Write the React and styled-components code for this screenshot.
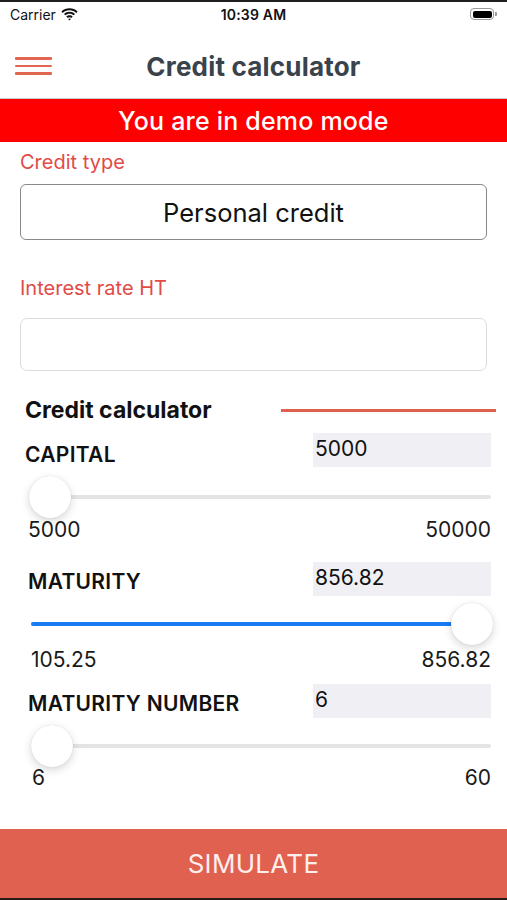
import React from "react";
import styled, { createGlobalStyle } from "styled-components";

const Global = createGlobalStyle`
  html, body { margin: 0; padding: 0; background: #fff; }
  body { font-family: Inter, "Noto Sans", "Liberation Sans", sans-serif; -webkit-font-smoothing: antialiased; }
  * { box-sizing: border-box; }
`;

const Screen = styled.div`
  width: 507px;
  height: 900px;
  display: flex;
  flex-direction: column;
  background: #fff;
  border-top: 2px solid #1e1e1e;
  border-bottom: 2px solid #2a1a18;
  overflow: hidden;
`;

const StatusBar = styled.div`
  height: 24px;
  display: grid;
  grid-template-columns: 1fr auto 1fr;
  align-items: center;
  padding: 0 10px;
  font-size: 14px;
  color: #111;
`;

const Carrier = styled.div`
  display: flex;
  align-items: center;
  gap: 5px;
  font-weight: 400;
`;

const Time = styled.div`
  font-weight: 600;
  letter-spacing: 0.2px;
`;

const Battery = styled.div`
  justify-self: end;
  display: flex;
  align-items: center;
`;

const BatteryBody = styled.div`
  width: 24px;
  height: 12px;
  border: 1px solid #9a9a9a;
  border-radius: 4px;
  padding: 1.5px;
  display: flex;
`;

const BatteryFill = styled.div`
  flex: 1;
  background: #000;
  border-radius: 2px;
`;

const BatteryNub = styled.div`
  width: 2px;
  height: 4px;
  background: #9a9a9a;
  border-radius: 0 1px 1px 0;
  margin-left: 1px;
`;

const NavBar = styled.div`
  height: 73px;
  display: flex;
  align-items: center;
  justify-content: center;
  position: relative;
  padding-top: 8px;
  border-bottom: 1px solid #c9c9c9;
`;

const Hamburger = styled.div`
  position: absolute;
  left: 15px;
  top: 31px;
  width: 37px;
  display: flex;
  flex-direction: column;
  gap: 5px;
`;

const HamLine = styled.div`
  height: 2.5px;
  background: #e06650;
  border-radius: 1px;
`;

const Title = styled.h1`
  margin: 0;
  font-size: 26px;
  font-weight: 700;
  color: #3a434b;
  letter-spacing: 0.2px;
`;

const Banner = styled.div`
  height: 43px;
  background: #ff0000;
  color: #fff;
  display: flex;
  align-items: center;
  justify-content: center;
  font-size: 25px;
  font-weight: 500;
  letter-spacing: 0.2px;
`;

const Form = styled.div`
  padding: 0 20px;
  display: flex;
  flex-direction: column;
`;

const FieldLabel = styled.div`
  color: #e24a47;
  font-size: 20px;
  line-height: 24px;
  margin-top: ${(p) => p.$top}px;
`;

const SelectBox = styled.div`
  margin-top: 10px;
  height: 56px;
  border: 1.5px solid #8a8a8a;
  border-radius: 6px;
  display: flex;
  align-items: center;
  justify-content: center;
  font-size: 25.5px;
  color: #111;
`;

const TextBox = styled.div`
  margin-top: 18px;
  height: 53px;
  border: 1.5px solid #dcdcdc;
  border-radius: 7px;
`;

const Calc = styled.div`
  padding: 0 16px 0 25px;
  display: flex;
  flex-direction: column;
  margin-top: 25px;
`;

const SectionHeader = styled.div`
  display: flex;
  align-items: center;
  justify-content: space-between;
  height: 28px;
  margin-right: -5px;
`;

const SectionTitle = styled.div`
  font-size: 23px;
  font-weight: 700;
  color: #111;
`;

const SectionRule = styled.div`
  width: 215px;
  height: 3px;
  background: #e0604e;
`;

const ParamRow = styled.div`
  display: flex;
  align-items: center;
  justify-content: space-between;
  height: 34px;
  margin-top: ${(p) => p.$top}px;
  padding-left: ${(p) => p.$indent}px;
`;

const ParamLabel = styled.div`
  font-size: 21px;
  font-weight: 600;
  color: #111;
  letter-spacing: 0.3px;
  padding-top: ${(p) => p.$drop}px;
`;

const ValueBox = styled.div`
  width: 178px;
  height: 34px;
  background: #efeff4;
  display: flex;
  align-items: center;
  padding-left: 2px;
  padding-bottom: 3px;
  font-size: 21px;
  color: #111;
`;

const SliderWrap = styled.div`
  position: relative;
  height: 44px;
  margin: ${(p) => p.$top}px -2px 0 4px;
  display: flex;
  align-items: center;
`;

const Track = styled.div`
  position: relative;
  flex: 1;
  height: 4px;
  background: #e4e4e4;
  border-radius: 2px;
  margin: 0 2px;
`;

const Fill = styled.div`
  position: absolute;
  left: 0;
  top: 0;
  bottom: 0;
  background: #1a7cf2;
  border-radius: 2px;
`;

const Thumb = styled.div`
  position: absolute;
  top: 1px;
  width: 42px;
  height: 42px;
  border-radius: 50%;
  background: #fff;
  box-shadow: 0 3px 8px rgba(0, 0, 0, 0.16), 0 0 1px rgba(0, 0, 0, 0.18);
`;

const Bounds = styled.div`
  display: flex;
  justify-content: space-between;
  font-size: 21px;
  line-height: 24px;
  color: #1a1a1a;
  margin-top: ${(p) => p.$top}px;
  padding-left: ${(p) => p.$indent}px;
`;

const Spacer = styled.div`
  flex: 1;
`;

const SimulateButton = styled.button`
  height: 69px;
  border: none;
  background: #e0614f;
  color: #fdeeee;
  font-family: inherit;
  font-size: 26px;
  font-weight: 400;
  letter-spacing: 0.3px;
  width: 100%;
`;

function Wifi() {
  return (
    <svg width="17" height="13" viewBox="0 0 17 13">
      <path d="M8.5 2.2c2.6 0 5 1 6.8 2.7l1.3-1.4C14.5 1.5 11.6.3 8.5.3S2.5 1.5.4 3.5l1.3 1.4C3.5 3.2 5.9 2.2 8.5 2.2z" fill="#111" />
      <path d="M8.5 5.7c1.6 0 3.1.6 4.2 1.6l1.3-1.4C12.5 4.6 10.6 3.8 8.5 3.8S4.5 4.6 3 5.9l1.3 1.4c1.1-1 2.6-1.6 4.2-1.6z" fill="#111" />
      <path d="M8.5 9.2c.7 0 1.3.3 1.8.7l1.4-1.4C10.9 7.7 9.7 7.3 8.5 7.3s-2.4.4-3.2 1.2l1.4 1.4c.5-.4 1.1-.7 1.8-.7zM8.5 12.6l1.4-1.5c-.4-.3-.9-.5-1.4-.5s-1 .2-1.4.5z" fill="#111" />
    </svg>
  );
}

function Slider({ frac, filled, top }) {
  return (
    <SliderWrap $top={top}>
      <Track>
        {filled && <Fill style={{ width: `${frac * 100}%` }} />}
      </Track>
      <Thumb style={{ left: `calc(${frac} * (100% - 42px))` }} />
    </SliderWrap>
  );
}

const params = [
  { label: "CAPITAL", value: "5000", min: "5000", max: "50000", frac: 0, filled: false, top: 9, indent: 0, drop: 9, sTop: 8, bTop: -1, bIndent: 3 },
  { label: "MATURITY", value: "856.82", min: "105.25", max: "856.82", frac: 1, filled: true, top: 20, indent: 3, drop: 4, sTop: 6, bTop: 2, bIndent: 6 },
  { label: "MATURITY NUMBER", value: "6", min: "6", max: "60", frac: 0.005, filled: false, top: 12, indent: 3, drop: 5, sTop: 6, bTop: -2, bIndent: 7 },
];

export default function App() {
  return (
    <>
      <Global />
      <Screen>
        <StatusBar>
          <Carrier>
            Carrier <Wifi />
          </Carrier>
          <Time>10:39 AM</Time>
          <Battery>
            <BatteryBody>
              <BatteryFill />
            </BatteryBody>
            <BatteryNub />
          </Battery>
        </StatusBar>
        <NavBar>
          <Hamburger>
            <HamLine />
            <HamLine />
            <HamLine />
          </Hamburger>
          <Title>Credit calculator</Title>
        </NavBar>
        <Banner>You are in demo mode</Banner>
        <Form>
          <FieldLabel $top={8}>Credit type</FieldLabel>
          <SelectBox>Personal credit</SelectBox>
          <FieldLabel $top={36}>Interest rate HT</FieldLabel>
          <TextBox />
        </Form>
        <Calc>
          <SectionHeader>
            <SectionTitle>Credit calculator</SectionTitle>
            <SectionRule />
          </SectionHeader>
          {params.map((p) => (
            <React.Fragment key={p.label}>
              <ParamRow $top={p.top} $indent={p.indent}>
                <ParamLabel $drop={p.drop}>{p.label}</ParamLabel>
                <ValueBox>{p.value}</ValueBox>
              </ParamRow>
              <Slider frac={p.frac} filled={p.filled} top={p.sTop} />
              <Bounds $top={p.bTop} $indent={p.bIndent}>
                <span>{p.min}</span>
                <span>{p.max}</span>
              </Bounds>
            </React.Fragment>
          ))}
        </Calc>
        <Spacer />
        <SimulateButton>SIMULATE</SimulateButton>
      </Screen>
    </>
  );
}
